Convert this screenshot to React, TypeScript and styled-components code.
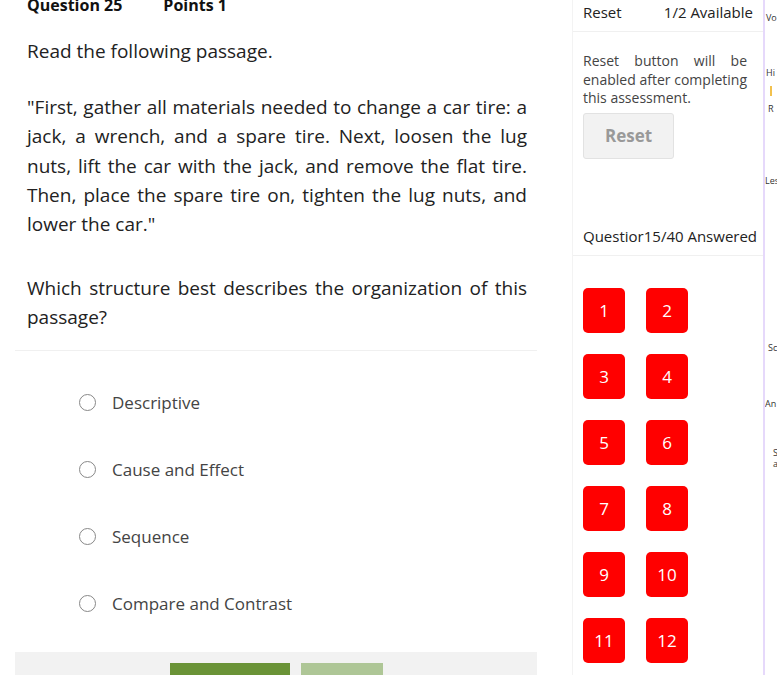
import styled, { createGlobalStyle } from 'styled-components';

const GlobalStyle = createGlobalStyle`
  html, body {
    margin: 0;
    padding: 0;
    background: #fff;
    overflow: hidden;
  }
  body {
    font-family: 'Open Sans', 'Liberation Sans', sans-serif;
    color: #222;
  }
`;

const Page = styled.div`
  display: flex;
  width: 777px;
  height: 675px;
  overflow: hidden;
`;

const Main = styled.div`
  width: 572px;
  flex-shrink: 0;
  display: flex;
  flex-direction: column;
`;

const MainInner = styled.div`
  margin-left: 15px;
  width: 522px;
  display: flex;
  flex-direction: column;
  flex: 1;
`;

const Header = styled.div`
  display: flex;
  gap: 41px;
  margin-top: -5px;
  padding-left: 12px;
  font-size: 16px;
  font-weight: 700;
  line-height: 20px;
  color: #111;
`;

const Body = styled.div`
  padding: 22px 10px 0 12px;
  font-size: 19px;
  line-height: 29.2px;
  color: #222;
  text-align: justify;
`;

const Para = styled.p<{ $gap?: number }>`
  margin: 0 0 ${(p) => p.$gap ?? 0}px 0;
`;

const Divider = styled.div`
  height: 1px;
  background: #f0f0f0;
  margin-top: 17px;
`;

const Options = styled.div`
  display: flex;
  flex-direction: column;
  gap: 43px;
  padding: 40px 0 0 64px;
`;

const Option = styled.label`
  display: flex;
  align-items: center;
  gap: 16px;
  font-size: 17px;
  line-height: 24px;
  color: #444;
`;

const Radio = styled.span`
  width: 17px;
  height: 17px;
  border: 1px solid #888;
  border-radius: 50%;
  box-sizing: border-box;
  flex-shrink: 0;
`;

const Footer = styled.div`
  margin-top: 36px;
  background: #f2f2f2;
  height: 30px;
  display: flex;
  justify-content: center;
  gap: 11px;
  padding-top: 11px;
  box-sizing: border-box;
`;

const FooterButton = styled.div<{ $light?: boolean }>`
  width: ${(p) => (p.$light ? 82 : 120)}px;
  height: 20px;
  background: ${(p) => (p.$light ? '#aec696' : '#6a9337')};
`;

const Side = styled.div`
  width: 190px;
  flex-shrink: 0;
  border-left: 1px solid #f3f3f3;
  border-right: 2px solid #e6d9fb;
  display: flex;
  flex-direction: column;

  & > * {
    flex-shrink: 0;
  }
`;

const SideTop = styled.div`
  display: flex;
  justify-content: space-between;
  padding: 0 10px;
  height: 32px;
  align-items: flex-start;
  font-size: 15px;
  line-height: 24px;
  color: #222;
  border-bottom: 1px solid #f0f0f0;
  box-sizing: border-box;
`;

const SideSection = styled.div`
  padding: 20px 16px 0 10px;
`;

const Note = styled.p`
  margin: 0;
  font-size: 14px;
  line-height: 18.5px;
  color: #444;
  text-align: justify;
`;

const ResetButton = styled.button`
  margin-top: 5px;
  width: 91px;
  height: 46px;
  background: #f2f2f2;
  border: 1px solid #e2e2e2;
  border-radius: 3px;
  font-family: inherit;
  font-size: 17px;
  font-weight: 700;
  color: #999;
  cursor: not-allowed;
`;

const Answered = styled.div`
  margin-top: 65px;
  padding: 0 6px 7px 10px;
  font-size: 15px;
  line-height: 24px;
  white-space: nowrap;
  color: #222;
  border-bottom: 1px solid #f0f0f0;
`;

const Grid = styled.div`
  display: grid;
  grid-template-columns: repeat(2, 42px);
  column-gap: 21px;
  row-gap: 21px;
  padding: 32px 0 0 10px;
`;

const QButton = styled.div`
  width: 42px;
  height: 45px;
  border-radius: 5px;
  background: #ff0000;
  color: #fff;
  font-size: 17px;
  display: flex;
  align-items: center;
  justify-content: center;
`;

const Strip = styled.div`
  flex: 1;
  position: relative;
  font-size: 9px;
  color: #333;
  white-space: nowrap;
  overflow: hidden;
`;

const StripLabel = styled.span<{ $top: number; $left?: number }>`
  position: absolute;
  top: ${(p) => p.$top}px;
  left: ${(p) => p.$left ?? 1}px;
`;

const StripMark = styled.span<{ $top: number }>`
  position: absolute;
  top: ${(p) => p.$top}px;
  left: 5px;
  width: 2px;
  height: 10px;
  background: #f2c14e;
`;

const options = ['Descriptive', 'Cause and Effect', 'Sequence', 'Compare and Contrast'];

export default function App() {
  return (
    <Page>
      <GlobalStyle />
      <Main>
        <MainInner>
          <Header>
            <span>Question 25</span>
            <span>Points 1</span>
          </Header>
          <Body>
            <Para $gap={27}>Read the following passage.</Para>
            <Para $gap={35}>
              "First, gather all materials needed to change a car tire: a jack, a wrench, and a spare
              tire. Next, loosen the lug nuts, lift the car with the jack, and remove the flat tire.
              Then, place the spare tire on, tighten the lug nuts, and lower the car."
            </Para>
            <Para>Which structure best describes the organization of this passage?</Para>
          </Body>
          <Divider />
          <Options>
            {options.map((o) => (
              <Option key={o}>
                <Radio />
                {o}
              </Option>
            ))}
          </Options>
          <Footer>
            <FooterButton />
            <FooterButton $light />
          </Footer>
        </MainInner>
      </Main>
      <Side>
        <SideTop>
          <span>Reset</span>
          <span>1/2 Available</span>
        </SideTop>
        <SideSection>
          <Note>Reset button will be enabled after completing this assessment.</Note>
          <ResetButton disabled>Reset</ResetButton>
        </SideSection>
        <Answered>Questior15/40 Answered</Answered>
        <Grid>
          {Array.from({ length: 12 }, (_, i) => (
            <QButton key={i}>{i + 1}</QButton>
          ))}
        </Grid>
      </Side>
      <Strip>
        <StripLabel $top={11}>Vo</StripLabel>
        <StripLabel $top={66}>Hi</StripLabel>
        <StripMark $top={86} />
        <StripLabel $top={102} $left={3}>R</StripLabel>
        <StripLabel $top={174} $left={0}>Les</StripLabel>
        <StripLabel $top={341} $left={3}>Sc</StripLabel>
        <StripLabel $top={397} $left={0}>An</StripLabel>
        <StripLabel $top={446} $left={8}>S</StripLabel>
        <StripLabel $top={457} $left={8}>a</StripLabel>
      </Strip>
    </Page>
  );
}
